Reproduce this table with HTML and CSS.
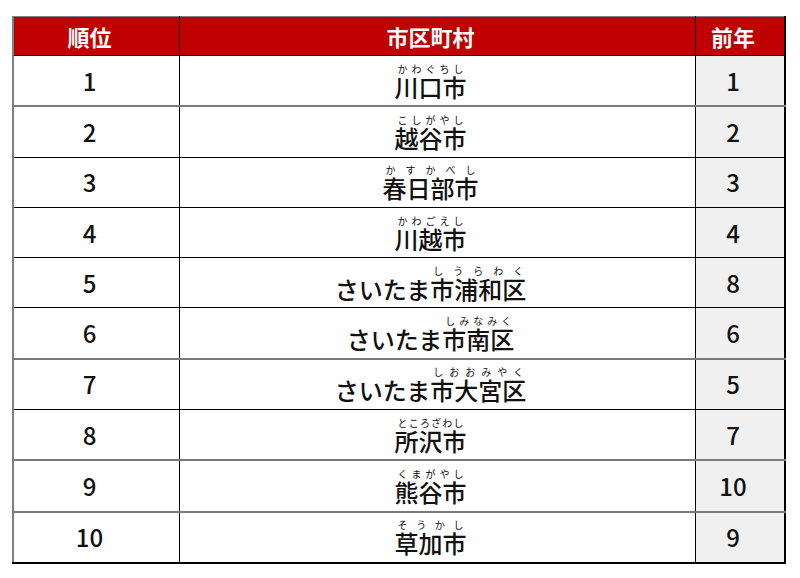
FILE: index.html
```html
<!DOCTYPE html>
<html lang="ja">
<head>
<meta charset="utf-8">
<link rel="stylesheet" href="styles.css">
</head>
<body>
<table class="rank">
  <thead>
    <tr><th class="c1">順位</th><th class="c2">市区町村</th><th class="c3">前年</th></tr>
  </thead>
  <tbody>
    <tr class="g"><td class="c1">1</td><td class="c2"><span class="rb"><span class="rt"><span>か</span><span>わ</span><span>ぐ</span><span>ち</span><span>し</span></span><span class="base">川口市</span></span></td><td class="c3">1</td></tr>
    <tr><td class="c1">2</td><td class="c2"><span class="rb"><span class="rt"><span>こ</span><span>し</span><span>が</span><span>や</span><span>し</span></span><span class="base">越谷市</span></span></td><td class="c3">2</td></tr>
    <tr><td class="c1">3</td><td class="c2"><span class="rb"><span class="rt"><span>か</span><span>す</span><span>か</span><span>べ</span><span>し</span></span><span class="base">春日部市</span></span></td><td class="c3">3</td></tr>
    <tr><td class="c1">4</td><td class="c2"><span class="rb"><span class="rt"><span>か</span><span>わ</span><span>ご</span><span>え</span><span>し</span></span><span class="base">川越市</span></span></td><td class="c3">4</td></tr>
    <tr><td class="c1">5</td><td class="c2"><span class="pre">さいたま</span><span class="rb"><span class="rt"><span>し</span><span>う</span><span>ら</span><span>わ</span><span>く</span></span><span class="base">市浦和区</span></span></td><td class="c3">8</td></tr>
    <tr class="g"><td class="c1">6</td><td class="c2"><span class="pre">さいたま</span><span class="rb"><span class="rt"><span>し</span><span>み</span><span>な</span><span>み</span><span>く</span></span><span class="base">市南区</span></span></td><td class="c3">6</td></tr>
    <tr><td class="c1">7</td><td class="c2"><span class="pre">さいたま</span><span class="rb"><span class="rt"><span>し</span><span>お</span><span>お</span><span>み</span><span>や</span><span>く</span></span><span class="base">市大宮区</span></span></td><td class="c3">5</td></tr>
    <tr class="g"><td class="c1">8</td><td class="c2"><span class="rb"><span class="rt"><span>と</span><span>こ</span><span>ろ</span><span>ざ</span><span>わ</span><span>し</span></span><span class="base">所沢市</span></span></td><td class="c3">7</td></tr>
    <tr class="g"><td class="c1">9</td><td class="c2"><span class="rb"><span class="rt"><span>く</span><span>ま</span><span>が</span><span>や</span><span>し</span></span><span class="base">熊谷市</span></span></td><td class="c3">10</td></tr>
    <tr class="last"><td class="c1">10</td><td class="c2"><span class="rb"><span class="rt"><span>そ</span><span>う</span><span>か</span><span>し</span></span><span class="base">草加市</span></span></td><td class="c3">9</td></tr>
  </tbody>
</table>
</body>
</html>
```

FILE: styles.css
```css
html, body {
  margin: 0;
  padding: 0;
  background: #ffffff;
}
body {
  padding: 16px 0 0 12px;
  font-family: "Noto Sans CJK JP", "Noto Sans", sans-serif;
  color: #111111;
}
.rank {
  border-collapse: collapse;
  width: 774px;
  table-layout: fixed;
  border-left: 2px solid #7f7f7f;
  border-top: 1px solid #7f7f7f;
}
.rank th {
  background: #c00000;
  color: #ffffff;
  font-size: 22px;
  font-weight: 700;
  height: 38px;
  padding: 0 14px 0 0;
  line-height: 1;
  border-right: 1px solid #000;
  border-bottom: 1px solid #000;
}
.rank td {
  height: 49.3px;
  padding: 0 14px 0 0;
  text-align: center;
  vertical-align: middle;
  font-size: 24px;
  font-weight: 500;
  line-height: 1;
  border-right: 1px solid #000;
  border-bottom: 1px solid #000;
}
.rank tr.g td {
  border-bottom: 2px solid #7a7a7a;
}
.rank tr.last td {
  border-bottom: 2px solid #000;
}
.rank .c1 { width: 151px; }
.rank .c3 { width: 74px; border-right: 2px solid #000; }
.rank td.c3 { background: #f0f0f0; }
.rank td.c2 {
  font-size: 24px;
  font-weight: 500;
}
.pre {
  display: inline-block;
  vertical-align: bottom;
  line-height: 26px;
}
.rb {
  display: inline-flex;
  flex-direction: column;
  align-items: stretch;
  vertical-align: bottom;
  padding-top: 1px;
}
.rt {
  display: flex;
  justify-content: space-between;
  font-size: 10px;
  line-height: 11px;
  font-weight: 400;
  padding: 0 3px;
}
.base {
  line-height: 26px;
}
```
